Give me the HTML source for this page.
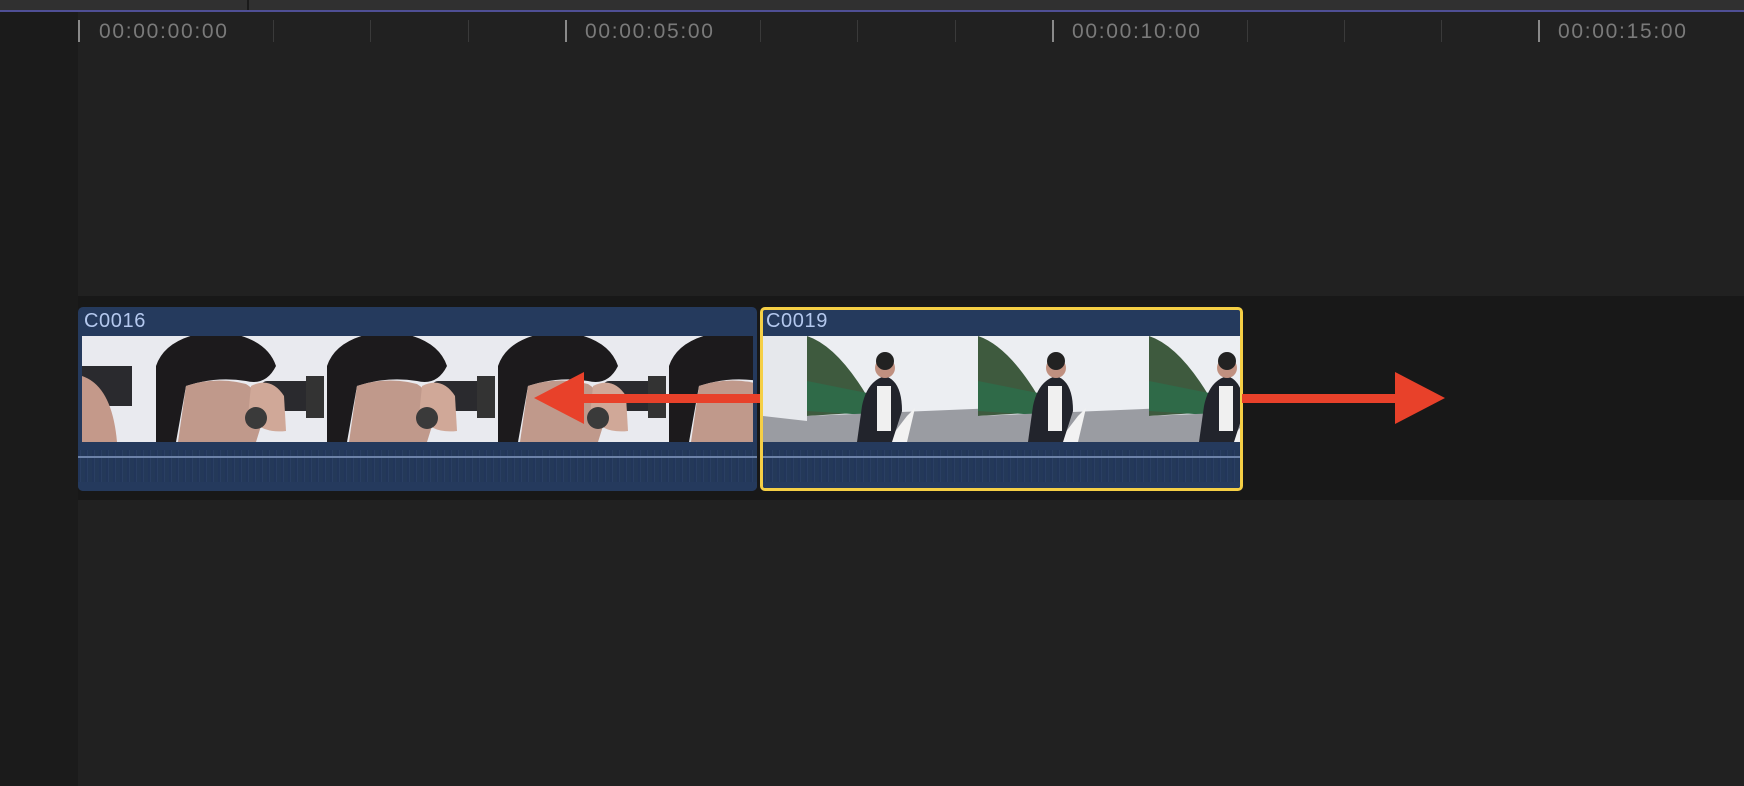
<!DOCTYPE html>
<html><head><style>
*{margin:0;padding:0;box-sizing:border-box}
body{width:1744px;height:786px;background:#212121;position:relative;overflow:hidden;font-family:"Liberation Sans",sans-serif}
.abs{position:absolute}
.lbl{position:absolute;top:20px;font-size:21px;color:#7a7a7a;letter-spacing:1.7px}
.tick{position:absolute;top:20px;width:1px;height:22px;background:#3a3a3a}
.maj{background:#8a8a8a;width:2px}
.clip{position:absolute;top:307px;height:184px;background:#253a5d;border-radius:5px;overflow:hidden}
.clip .name{position:absolute;left:6px;top:3px;font-size:20px;color:#b4c8ee;letter-spacing:0.6px}
.thumbs{position:absolute;top:29px;height:106px;left:4px;right:4px;overflow:hidden;background:#e6e8ee}
.wave{position:absolute;top:135px;left:0;right:0;bottom:0;background:#253a5d}
.wave:before{content:"";position:absolute;left:0;right:0;top:8px;height:32px;background:repeating-linear-gradient(90deg,#22365a 0 2px,#2a3f63 2px 3px,#243959 3px 7px)}
.wline{position:absolute;left:0;right:0;top:14px;height:2px;background:#6c82a8}
.f{position:absolute;top:0;height:106px;width:190px;overflow:hidden}
</style></head><body>
<div class="abs" style="left:0;top:0;width:1744px;height:10px;background:#303030"></div>
<div class="abs" style="left:247px;top:0;width:2px;height:10px;background:#1a1a1a"></div>
<div class="abs" style="left:0;top:10px;width:1744px;height:2px;background:#4f4f95"></div>
<div class="abs" style="left:0;top:12px;width:78px;height:774px;background:#1b1b1b"></div>
<div class="abs" style="left:78px;top:296px;width:1666px;height:204px;background:#181818"></div>

<div class="tick maj" style="left:78px"></div><div class="lbl" style="left:99px">00:00:00:00</div>
<div class="tick" style="left:273px"></div><div class="tick" style="left:370px"></div><div class="tick" style="left:468px"></div>
<div class="tick maj" style="left:565px"></div><div class="lbl" style="left:585px">00:00:05:00</div>
<div class="tick" style="left:760px"></div><div class="tick" style="left:857px"></div><div class="tick" style="left:955px"></div>
<div class="tick maj" style="left:1052px"></div><div class="lbl" style="left:1072px">00:00:10:00</div>
<div class="tick" style="left:1247px"></div><div class="tick" style="left:1344px"></div><div class="tick" style="left:1441px"></div>
<div class="tick maj" style="left:1538px"></div><div class="lbl" style="left:1558px">00:00:15:00</div>

<div class="clip" style="left:78px;width:679px">
<div class="name">C0016</div>
<div class="thumbs">
<svg width="0" height="0">
<g id="p">
<rect x="0" y="0" width="190" height="106" fill="#e9eaef"/>
<path d="M0 30 Q10 0 60 -5 Q110 0 120 30 Q110 50 90 45 Q60 40 30 50 L20 106 L0 106Z" fill="#1c1a1c"/>
<path d="M22 106 L30 50 Q60 40 90 48 Q110 60 105 90 L100 106Z" fill="#c0998b"/>
<rect x="105" y="45" width="55" height="30" rx="6" fill="#2a2a2e"/>
<rect x="150" y="40" width="18" height="42" fill="#333"/>
<path d="M95 50 Q115 40 128 60 L130 95 Q105 98 92 80Z" fill="#d0a898"/>
<circle cx="100" cy="82" r="11" fill="#3a3a3a"/>
</g>
</svg>
<div class="f" style="left:0;background:#e9eaef"><svg width="80" height="106"><rect x="0" y="30" width="50" height="40" fill="#2a2a2e"/><path d="M0 40 Q30 50 35 106 L0 106Z" fill="#c4998a"/></svg></div>
<div class="f" style="left:74px"><svg width="190" height="106"><use href="#p"/></svg></div>
<div class="f" style="left:245px"><svg width="190" height="106"><use href="#p"/></svg></div>
<div class="f" style="left:416px"><svg width="190" height="106"><use href="#p"/></svg></div>
<div class="f" style="left:587px"><svg width="190" height="106"><use href="#p"/></svg></div>
</div>
<div class="wave"><div class="wline"></div></div>
</div>

<div class="clip" style="left:760px;width:483px;border:3px solid #f5cf45">
<div class="name" style="left:3px;top:0">C0019</div>
<div class="thumbs" style="left:0;right:0;top:26px">
<svg width="0" height="0"><g id="q">
<rect x="0" y="0" width="190" height="106" fill="#eceef2"/>
<path d="M0 0 Q30 10 60 60 L80 75 L0 80Z" fill="#3e5a3e"/>
<path d="M0 45 L75 60 L75 80 L0 75Z" fill="#2f6a48"/>
<path d="M0 80 L190 72 L190 106 L0 106Z" fill="#9a9ca2"/>
<path d="M80 106 L100 80 L108 72 L100 106Z" fill="#f2f2f2"/>
<path d="M55 70 Q60 45 78 40 Q95 45 95 75 L85 106 L50 106Z" fill="#22242c"/>
<rect x="70" y="50" width="14" height="45" fill="#f0f0f0"/>
<circle cx="78" cy="32" r="10" fill="#c09080"/>
<circle cx="78" cy="25" r="9" fill="#222"/>
</g></svg>
<div class="f" style="left:0;background:#e6e8ec"><svg width="44" height="106"><path d="M0 80 L44 85 L44 106 L0 106Z" fill="#9a9ca2"/></svg></div>
<div class="f" style="left:44px"><svg width="190" height="106"><use href="#q"/></svg></div>
<div class="f" style="left:215px"><svg width="190" height="106"><use href="#q"/></svg></div>
<div class="f" style="left:386px"><svg width="190" height="106"><use href="#q"/></svg></div>
</div>
<div class="wave" style="top:132px"><div class="wline"></div></div>
</div>

<svg class="abs" style="left:0;top:0" width="1744" height="786">
<rect x="580" y="394" width="180" height="9" fill="#e8412a"/>
<polygon points="534,398 584,372 584,424" fill="#e8412a"/>
<rect x="1242" y="394" width="158" height="9" fill="#e8412a"/>
<polygon points="1445,398 1395,372 1395,424" fill="#e8412a"/>
</svg>
</body></html>
